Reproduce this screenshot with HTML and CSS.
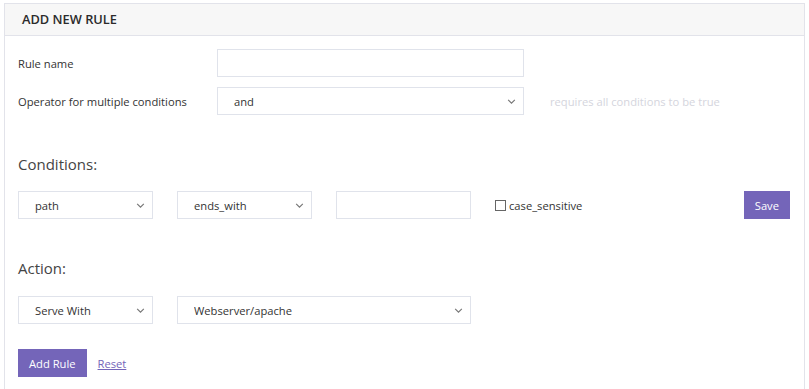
FILE: index.html
```html
<!DOCTYPE html>
<html lang="en">
<head>
  <meta charset="UTF-8">
  <meta name="viewport" content="width=device-width, initial-scale=1.0">
  <title>Add new rule</title>
  <link rel="stylesheet" href="styles.css">
</head>
<body>
  <div class="panel">
    <div class="panel-header">Add new rule</div>

    <div class="panel-body">
      <div class="form-row">
        <label class="form-label">Rule name</label>
        <input class="field field-wide" type="text">
      </div>

      <div class="form-row">
        <label class="form-label">Operator for multiple conditions</label>
        <div class="select-wrap field-wide">
          <select class="field">
            <option>and</option>
            <option>or</option>
          </select>
          <svg class="chevron" viewBox="0 0 10 6"><path d="M1 1l4 4 4-4"/></svg>
        </div>
        <span class="hint">requires all conditions to be true</span>
      </div>

      <h3 class="section-title">Conditions:</h3>
      <div class="inline-row">
        <div class="select-wrap field-sm">
          <select class="field"><option>path</option></select>
          <svg class="chevron" viewBox="0 0 10 6"><path d="M1 1l4 4 4-4"/></svg>
        </div>
        <div class="select-wrap field-sm">
          <select class="field"><option>ends_with</option></select>
          <svg class="chevron" viewBox="0 0 10 6"><path d="M1 1l4 4 4-4"/></svg>
        </div>
        <input class="field field-sm" type="text">
        <label class="check"><span class="box"></span>case_sensitive</label>
        <button class="btn btn-save">Save</button>
      </div>

      <h3 class="section-title section-action">Action:</h3>
      <div class="inline-row">
        <div class="select-wrap field-sm">
          <select class="field"><option>Serve With</option></select>
          <svg class="chevron" viewBox="0 0 10 6"><path d="M1 1l4 4 4-4"/></svg>
        </div>
        <div class="select-wrap field-md">
          <select class="field"><option>Webserver/apache</option></select>
          <svg class="chevron" viewBox="0 0 10 6"><path d="M1 1l4 4 4-4"/></svg>
        </div>
      </div>

      <div class="actions">
        <button class="btn">Add Rule</button>
        <a href="#" class="link">Reset</a>
      </div>
    </div>
  </div>
</body>
</html>
```

FILE: styles.css
```css
body {
  margin: 0;
  padding: 3px 4px 0 4px;
  font-family: "Open Sans", "Noto Sans", sans-serif;
  font-size: 11.2px;
  color: #333;
  background: #fff;
}

.panel {
  border: 1px solid #e2e3ea;
  border-bottom: none;
  width: 801px;
  box-sizing: border-box;
}

.panel-header {
  background: #f7f7f7;
  border-bottom: 1px solid #e2e3ea;
  height: 31px;
  line-height: 31px;
  padding-left: 17px;
  font-size: 12.8px;
  font-weight: 600;
  text-transform: uppercase;
  color: #2b2b2b;
}

.panel-body {
  padding: 13px 14px 14px 13px;
}

.form-row {
  display: flex;
  align-items: center;
  margin-bottom: 10px;
}

.form-label {
  width: 199px;
  flex-shrink: 0;
}

.field {
  box-sizing: border-box;
  height: 28px;
  border: 1px solid #e0e3eb;
  border-radius: 0;
  background: #fff;
  font-family: inherit;
  font-size: 11.2px;
  color: #333;
  padding: 0 16px;
  outline: none;
}

.field-wide { width: 307px; }
.field-sm { width: 135px; }
.field-md { width: 294px; }

.select-wrap {
  position: relative;
  height: 28px;
}

.select-wrap select {
  width: 100%;
  -webkit-appearance: none;
  appearance: none;
}

.chevron {
  position: absolute;
  right: 8px;
  top: 12px;
  width: 9px;
  height: 5px;
  fill: none;
  stroke: #777;
  stroke-width: 1.4;
  pointer-events: none;
}

.hint {
  margin-left: 26px;
  color: #d4d5dd;
}

.section-title {
  font-size: 15px;
  font-weight: 400;
  color: #444;
  margin: 39px 0 17px 0;
}

.section-action {
  margin-bottom: 18px;
}

.inline-row {
  display: flex;
  align-items: center;
  gap: 24px;
}

.check {
  display: flex;
  align-items: center;
  gap: 3px;
}

.check .box {
  width: 9px;
  height: 9px;
  border: 1px solid #666;
}

.btn {
  background: #7465b9;
  color: #fff;
  border: none;
  height: 28px;
  padding: 0 11px;
  font-family: inherit;
  font-size: 11.2px;
  cursor: pointer;
}

.btn-save {
  margin-left: auto;
}

.actions {
  display: flex;
  align-items: center;
  gap: 11px;
  margin-top: 25px;
}

.link {
  color: #7465b9;
}
```
